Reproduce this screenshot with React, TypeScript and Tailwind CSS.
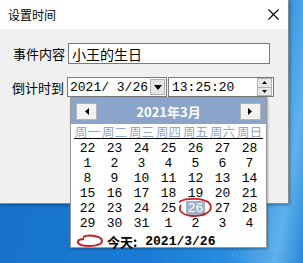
import React from 'react'

const weekdays = ['周一', '周二', '周三', '周四', '周五', '周六', '周日']

const weeks = [
  ['22', '23', '24', '25', '26', '27', '28'],
  ['1', '2', '3', '4', '5', '6', '7'],
  ['8', '9', '10', '11', '12', '13', '14'],
  ['15', '16', '17', '18', '19', '20', '21'],
  ['22', '23', '24', '25', '26', '27', '28'],
  ['29', '30', '31', '1', '2', '3', '4'],
]

const cjk = { fontFamily: '"Noto Sans CJK SC", "Noto Sans", sans-serif' }
const mono = { fontFamily: '"Liberation Mono", "Noto Sans CJK SC", monospace' }

function Arrow({ dir }: { dir: 'left' | 'right' | 'down' }) {
  if (dir === 'down') {
    return (
      <svg width="8" height="5" viewBox="0 0 8 5">
        <polygon points="0,0 8,0 4,5" fill="#000" />
      </svg>
    )
  }
  return (
    <svg width="4" height="7" viewBox="0 0 4 7">
      <polygon points={dir === 'left' ? '4,0 4,7 0,3.5' : '0,0 0,7 4,3.5'} fill="#000" />
    </svg>
  )
}

function Calendar() {
  return (
    <div className="absolute left-[70px] top-[97px] w-[197px] h-[151px] bg-white border border-[#9a9a9a] shadow-[1px_1px_2px_rgba(0,0,0,0.3)]">
      {/* header */}
      <div className="h-[26px] bg-[#8aa5c9] flex items-center justify-between px-[5px]">
        <div className="w-[21px] h-[17px] bg-[#f2f2f2] border border-[#b5b5b5] flex items-center justify-center">
          <Arrow dir="left" />
        </div>
        <span className="text-white font-bold text-[13px] leading-none" style={cjk}>2021年3月</span>
        <div className="w-[21px] h-[17px] bg-[#f2f2f2] border border-[#b5b5b5] flex items-center justify-center">
          <Arrow dir="right" />
        </div>
      </div>
      {/* weekday names */}
      <div className="mx-[3px] grid grid-cols-7 h-[15px] border-b border-black text-[#8ea7cb] text-[12.5px] leading-[15px]" style={cjk}>
        {weekdays.map((d) => (
          <div key={d} className="text-center">{d}</div>
        ))}
      </div>
      {/* dates */}
      <div className="mx-[3px] mt-[2px] flex flex-col">
        {weeks.map((w, i) => (
          <div key={i} className="grid grid-cols-7 h-[15px] text-[13px] leading-[15px]" style={mono}>
            {w.map((d, j) => {
              const selected = i === 4 && j === 4
              return (
                <div key={j} className="relative flex justify-center">
                  {selected ? (
                    <>
                      <span className="px-[2px] bg-[#9fb2cc] text-white">{d}</span>
                      <svg className="absolute left-[-6px] top-[-6px]" width="38" height="26" viewBox="0 0 38 26">
                        <path d="M3 7 C10 2, 30 3, 34 9 C38 17, 26 22, 16 21 C5 20, 2 15, 5 10" fill="none" stroke="#c42025" strokeWidth="1.8" />
                      </svg>
                    </>
                  ) : (
                    <span>{d}</span>
                  )}
                </div>
              )
            })}
          </div>
        ))}
      </div>
      {/* today */}
      <div className="flex items-center mt-[2px] pl-[4px] h-[16px]">
        <svg width="30" height="14" viewBox="0 0 30 14" className="mr-[2px]">
          <path d="M8 3 C14 0, 27 2, 27 7 C27 12, 14 13, 6 11 C1 9, 2 5, 9 5" fill="none" stroke="#c42025" strokeWidth="2" />
        </svg>
        <span className="font-bold text-[13px] leading-none" style={cjk}>今天:</span>
        <span className="font-bold text-[13px] leading-none ml-[8px]" style={mono}>2021/3/26</span>
      </div>
    </div>
  )
}

export default function App() {
  return (
    <div
      className="relative w-[303px] h-[263px] overflow-hidden"
      style={{ background: 'linear-gradient(100deg, #1670c9 0%, #1a7bd6 55%, #2a8fe2 80%, #5fb2ec 92%, #2c86d8 100%)' }}
    >
      {/* dialog window */}
      <div className="w-[289px] h-[204px] bg-[#f0f0f0] border-r border-b border-[#8a8a8a] shadow-[1px_1px_3px_rgba(0,0,0,0.35)] flex flex-col" style={cjk}>
        <div className="h-[29px] shrink-0 bg-white flex items-center justify-between pl-[8px] pr-[9px]">
          <span className="text-[12px] text-black">设置时间</span>
          <svg width="11" height="11" viewBox="0 0 11 11">
            <path d="M0.5 0.5 L10.5 10.5 M10.5 0.5 L0.5 10.5" stroke="#000" strokeWidth="1.1" />
          </svg>
        </div>

        <div className="flex items-center mt-[14px] pl-[13px]">
          <span className="text-[13px] w-[55px] shrink-0 whitespace-nowrap leading-none">事件内容</span>
          <div className="w-[202px] h-[21px] bg-white border border-[#7a7a7a] flex items-center pl-[3px] text-[14px] leading-none">
            小王的生日
          </div>
        </div>

        <div className="flex items-center mt-[13px] pl-[12px]">
          <span className="text-[13px] w-[55px] shrink-0 whitespace-nowrap leading-none">倒计时到</span>
          <div className="w-[100px] shrink-0 h-[20px] bg-white border border-[#7a7a7a] flex items-center">
            <span className="flex-1 pl-[2px] text-[13px] leading-none whitespace-pre" style={mono}>2021/ 3/26</span>
            <div className="w-[15px] h-[16px] mr-[1px] bg-[#e5e5e5] border border-[#b0b0b0] flex items-center justify-center">
              <Arrow dir="down" />
            </div>
          </div>
          <div className="ml-[1px] w-[106px] shrink-0 h-[20px] bg-white border border-[#7a7a7a] flex items-center">
            <span className="flex-1 pl-[3px] text-[13px] leading-none" style={mono}>13:25:20</span>
            <div className="w-[15px] h-[18px] mr-[1px] flex flex-col">
              <div className="flex-1 bg-[#e8e8e8] border border-[#b0b0b0] flex items-center justify-center">
                <svg width="5" height="3" viewBox="0 0 5 3"><polygon points="0,3 5,3 2.5,0" fill="#000" /></svg>
              </div>
              <div className="flex-1 bg-[#e8e8e8] border border-[#b0b0b0] border-t-0 flex items-center justify-center">
                <svg width="5" height="3" viewBox="0 0 5 3"><polygon points="0,0 5,0 2.5,3" fill="#000" /></svg>
              </div>
            </div>
          </div>
        </div>
      </div>

      <Calendar />

      <span className="absolute left-[230px] top-[246px] text-[11px] text-[#5fa0e0] opacity-60" style={{ fontFamily: '"Liberation Sans", sans-serif' }}>
        xnzaiba.com
      </span>
    </div>
  )
}
